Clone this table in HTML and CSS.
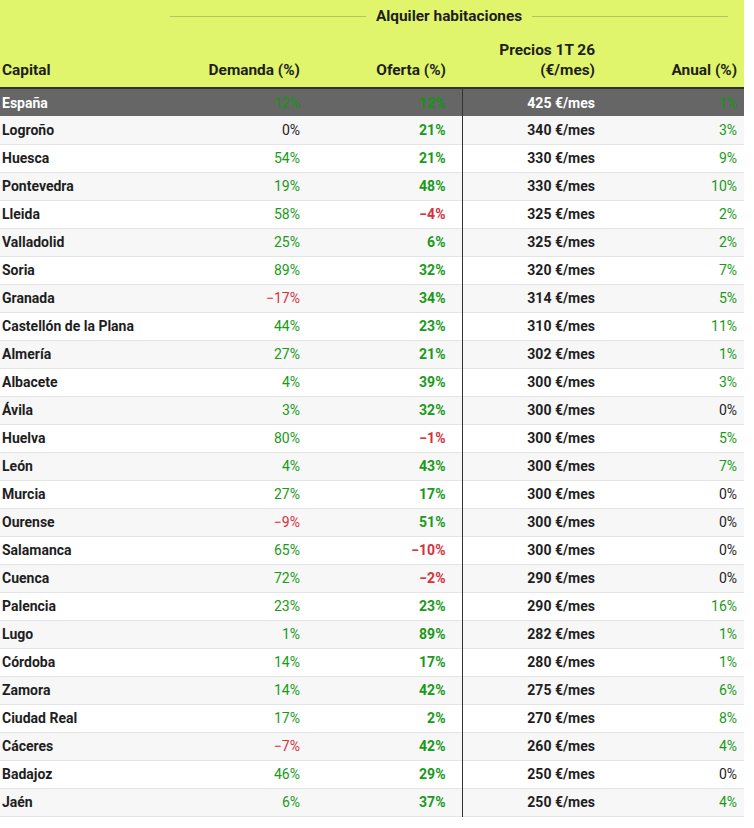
FILE: index.html
```html
<!DOCTYPE html>
<html lang="es">
<head>
<meta charset="utf-8">
<title>Alquiler habitaciones</title>
<link rel="stylesheet" href="styles.css">
</head>
<body>
<table class="tbl">
<colgroup>
<col class="c-cap"><col class="c-dem"><col class="c-of"><col class="c-pr"><col class="c-an">
</colgroup>
<thead>
<tr class="title-row">
<th></th>
<th colspan="4" class="title-cell"><div class="title"><span class="rule"></span><span class="title-text">Alquiler habitaciones</span><span class="rule"></span></div></th>
</tr>
<tr class="head-row">
<th class="cap">Capital</th>
<th class="num dem">Demanda (%)</th>
<th class="num of">Oferta (%)</th>
<th class="num pr">Precios 1T 26<br>(€/mes)</th>
<th class="num an">Anual (%)</th>
</tr>
</thead>
<tbody>
<tr class="total"><td class="cap">España</td><td class="num dem g">12%</td><td class="num of g">12%</td><td class="num pr">425 €/mes</td><td class="num an g">1%</td></tr>
<tr><td class="cap">Logroño</td><td class="num dem">0%</td><td class="num of g">21%</td><td class="num pr">340 €/mes</td><td class="num an g">3%</td></tr>
<tr><td class="cap">Huesca</td><td class="num dem g">54%</td><td class="num of g">21%</td><td class="num pr">330 €/mes</td><td class="num an g">9%</td></tr>
<tr><td class="cap">Pontevedra</td><td class="num dem g">19%</td><td class="num of g">48%</td><td class="num pr">330 €/mes</td><td class="num an g">10%</td></tr>
<tr><td class="cap">Lleida</td><td class="num dem g">58%</td><td class="num of r">−4%</td><td class="num pr">325 €/mes</td><td class="num an g">2%</td></tr>
<tr><td class="cap">Valladolid</td><td class="num dem g">25%</td><td class="num of g">6%</td><td class="num pr">325 €/mes</td><td class="num an g">2%</td></tr>
<tr><td class="cap">Soria</td><td class="num dem g">89%</td><td class="num of g">32%</td><td class="num pr">320 €/mes</td><td class="num an g">7%</td></tr>
<tr><td class="cap">Granada</td><td class="num dem r">−17%</td><td class="num of g">34%</td><td class="num pr">314 €/mes</td><td class="num an g">5%</td></tr>
<tr><td class="cap">Castellón de la Plana</td><td class="num dem g">44%</td><td class="num of g">23%</td><td class="num pr">310 €/mes</td><td class="num an g">11%</td></tr>
<tr><td class="cap">Almería</td><td class="num dem g">27%</td><td class="num of g">21%</td><td class="num pr">302 €/mes</td><td class="num an g">1%</td></tr>
<tr><td class="cap">Albacete</td><td class="num dem g">4%</td><td class="num of g">39%</td><td class="num pr">300 €/mes</td><td class="num an g">3%</td></tr>
<tr><td class="cap">Ávila</td><td class="num dem g">3%</td><td class="num of g">32%</td><td class="num pr">300 €/mes</td><td class="num an">0%</td></tr>
<tr><td class="cap">Huelva</td><td class="num dem g">80%</td><td class="num of r">−1%</td><td class="num pr">300 €/mes</td><td class="num an g">5%</td></tr>
<tr><td class="cap">León</td><td class="num dem g">4%</td><td class="num of g">43%</td><td class="num pr">300 €/mes</td><td class="num an g">7%</td></tr>
<tr><td class="cap">Murcia</td><td class="num dem g">27%</td><td class="num of g">17%</td><td class="num pr">300 €/mes</td><td class="num an">0%</td></tr>
<tr><td class="cap">Ourense</td><td class="num dem r">−9%</td><td class="num of g">51%</td><td class="num pr">300 €/mes</td><td class="num an">0%</td></tr>
<tr><td class="cap">Salamanca</td><td class="num dem g">65%</td><td class="num of r">−10%</td><td class="num pr">300 €/mes</td><td class="num an">0%</td></tr>
<tr><td class="cap">Cuenca</td><td class="num dem g">72%</td><td class="num of r">−2%</td><td class="num pr">290 €/mes</td><td class="num an">0%</td></tr>
<tr><td class="cap">Palencia</td><td class="num dem g">23%</td><td class="num of g">23%</td><td class="num pr">290 €/mes</td><td class="num an g">16%</td></tr>
<tr><td class="cap">Lugo</td><td class="num dem g">1%</td><td class="num of g">89%</td><td class="num pr">282 €/mes</td><td class="num an g">1%</td></tr>
<tr><td class="cap">Córdoba</td><td class="num dem g">14%</td><td class="num of g">17%</td><td class="num pr">280 €/mes</td><td class="num an g">1%</td></tr>
<tr><td class="cap">Zamora</td><td class="num dem g">14%</td><td class="num of g">42%</td><td class="num pr">275 €/mes</td><td class="num an g">6%</td></tr>
<tr><td class="cap">Ciudad Real</td><td class="num dem g">17%</td><td class="num of g">2%</td><td class="num pr">270 €/mes</td><td class="num an g">8%</td></tr>
<tr><td class="cap">Cáceres</td><td class="num dem r">−7%</td><td class="num of g">42%</td><td class="num pr">260 €/mes</td><td class="num an g">4%</td></tr>
<tr><td class="cap">Badajoz</td><td class="num dem g">46%</td><td class="num of g">29%</td><td class="num pr">250 €/mes</td><td class="num an">0%</td></tr>
<tr><td class="cap">Jaén</td><td class="num dem g">6%</td><td class="num of g">37%</td><td class="num pr">250 €/mes</td><td class="num an g">4%</td></tr>
</tbody>
</table>
</body>
</html>
```
FILE: styles.css
```css
html, body {
  margin: 0;
  padding: 0;
  background: #ffffff;
}
body {
  font-family: Roboto, "Liberation Sans", sans-serif;
  font-size: 14px;
  color: #1e1e1e;
}
.tbl {
  width: 744px;
  border-collapse: collapse;
  table-layout: fixed;
}
.c-cap { width: 162px; }
.c-dem { width: 145px; }
.c-of { width: 155px; }
.c-pr { width: 141px; }
.c-an { width: 141px; }

thead {
  background: #e1f56c;
  font-size: 15.4px;
}
th {
  font-weight: 700;
  padding: 0;
}
.title-row th {
  height: 32px;
  vertical-align: middle;
}
.title-cell {
  padding: 0 16px 0 8px;
}
.title {
  display: flex;
  align-items: center;
  gap: 10px;
}
.rule {
  flex: 1;
  height: 1px;
  background: #b5c45e;
}
.title-text {
  line-height: 20px;
}
.head-row th {
  height: 48px;
  vertical-align: bottom;
  line-height: 20px;
  padding-bottom: 7px;
  border-bottom: 2px solid #333333;
}
.cap {
  text-align: left;
  padding-left: 2px;
  font-weight: 700;
}
.num { text-align: right; }
.dem { padding-right: 7px; }
.of { padding-right: 16px; font-weight: 700; }
.pr { padding-right: 8px; font-weight: 700; }
.an { padding-right: 7px; }
td.dem, td.an { font-weight: 400; }
td.pr { border-left: 1px solid #333333; }

tbody tr {
  height: 28px;
  border-bottom: 1px solid #e4e4e4;
}
tbody tr:nth-child(even) { background: #f7f7f7; }
tbody tr:nth-child(odd) { background: #ffffff; }
tbody tr.total {
  background: #666666;
  color: #ffffff;
  border-bottom: none;
}
td {
  padding-top: 0;
  padding-bottom: 0;
  line-height: 20px;
}
.g { color: #1a9a1a; }
.r { color: #d9303c; }
.total .g { color: #139613; }
```
